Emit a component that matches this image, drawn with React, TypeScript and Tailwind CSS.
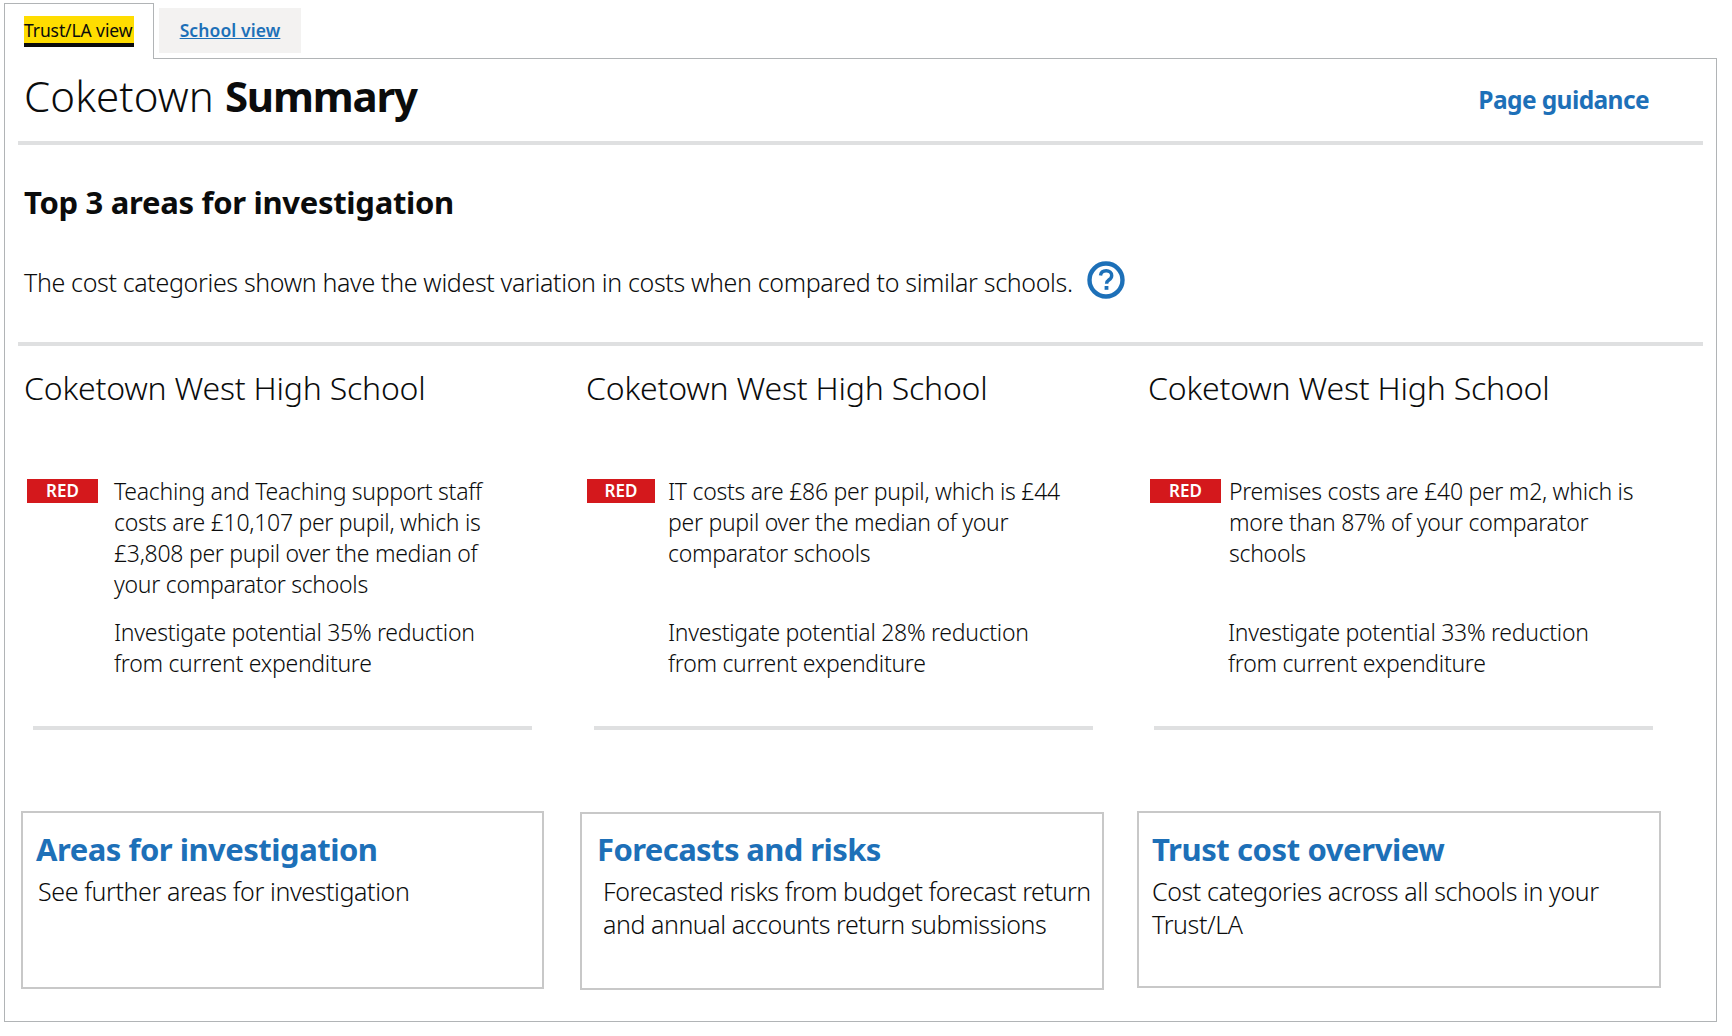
import React from "react";

const font = { fontFamily: '"Noto Sans", "Open Sans", sans-serif' };

const columns = [
  {
    badgeW: "w-[71px]", badgeMl: "ml-[3px]", textMl: "ml-[16px]", secondMl: "ml-[90px]", ruleMl: "ml-[9px]",
    text: ["Teaching and Teaching support staff", "costs are £10,107 per pupil, which is", "£3,808 per pupil over the median of", "your comparator schools"],
    pct: "35%",
  },
  {
    badgeW: "w-[68px]", badgeMl: "ml-[1px]", textMl: "ml-[13px]", secondMl: "ml-[82px]", ruleMl: "ml-[8px]",
    text: ["IT costs are £86 per pupil, which is £44", "per pupil over the median of your", "comparator schools"],
    pct: "28%",
  },
  {
    badgeW: "w-[71px]", badgeMl: "ml-[2px]", textMl: "ml-[8px]", secondMl: "ml-[80px]", ruleMl: "ml-[6px]",
    text: ["Premises costs are £40 per m2, which is", "more than 87% of your comparator", "schools"],
    pct: "33%",
  },
];

function HelpIcon() {
  return (
    <svg width="38" height="38" viewBox="0 0 38 38" className="ml-[14px] -mt-[5px] shrink-0" aria-hidden="true">
      <circle cx="19" cy="19" r="16.5" fill="none" stroke="#1d70b8" strokeWidth="4.4" />
      <path d="M13.5 14.5c.4-3 2.7-4.8 5.7-4.8 3.2 0 5.5 1.9 5.5 4.7 0 2.2-1.2 3.4-2.9 4.6-1.6 1.1-2.2 1.9-2.2 3.8" fill="none" stroke="#1d70b8" strokeWidth="3.4" />
      <rect x="17.6" y="25" width="3.8" height="3.8" fill="#1d70b8" />
    </svg>
  );
}

export default function App() {
  return (
    <div className="w-[1732px] h-[1036px] bg-white text-[#0b0c0c] overflow-hidden pt-[3px] pl-[4px]" style={font}>
      <div className="w-[1713px]">
        <div className="flex items-start h-[55px]">
          <div className="relative z-10 w-[150px] h-[56px] bg-white border border-b-0 border-[#b1b4b6] pl-[19px] pt-[12px]">
            <span className="block w-[110px] h-[31px] bg-[#ffdd00] border-b-[4px] border-[#0b0c0c] text-[17.5px] leading-[28px] tracking-[-0.1px] whitespace-nowrap">Trust/LA view</span>
          </div>
          <div className="ml-[5px] mt-[5px] w-[142px] h-[45px] bg-[#f3f2f1] flex items-center justify-center">
            <a className="text-[17.5px] font-semibold text-[#1d70b8] underline tracking-[0.1px] whitespace-nowrap">School view</a>
          </div>
        </div>
        <div className="h-[964px] border border-[#b1b4b6]">
          <div className="ml-[13px] w-[1685px] h-[86px] border-b-[4px] border-[#dfe0e1] flex items-start justify-between">
            <h1 className="ml-[6px] mt-[9px] text-[42px] leading-[56px] font-light tracking-[0.1px] whitespace-nowrap">
              Coketown <span className="font-bold tracking-[-1.2px]">Summary</span>
            </h1>
            <a className="mr-[54px] mt-[23px] text-[24.5px] leading-[36px] font-bold text-[#1d70b8] tracking-[-0.6px] whitespace-nowrap">Page guidance</a>
          </div>
          <div className="ml-[13px] w-[1685px] h-[166px] border-b-[4px] border-[#dfe0e1] pl-[6px]">
            <h2 className="mt-[35px] text-[31px] leading-[44px] font-bold tracking-[-0.3px] whitespace-nowrap">Top 3 areas for investigation</h2>
            <div className="mt-[41px] flex items-center">
              <p className="text-[25px] leading-[34px] font-light tracking-[-0.35px] whitespace-nowrap">The cost categories shown have the widest variation in costs when compared to similar schools.</p>
              <HelpIcon />
            </div>
          </div>
          <div className="pl-[19px] grid grid-cols-[562px_562px_562px]">
            {columns.map((c, i) => (
              <div key={i} className="h-[469px]">
                <h3 className="mt-[20px] text-[32px] leading-[44px] font-light tracking-[-0.2px] whitespace-nowrap">Coketown West High School</h3>
                <div className="mt-[69px] h-[138px] flex items-start">
                  <span className={`${c.badgeMl} ${c.badgeW} h-[24px] bg-[#d4181c] text-white text-[17px] leading-[24px] font-semibold text-center shrink-0`}>RED</span>
                  <div className={`${c.textMl} -mt-[3px] text-[23px] leading-[31px] font-light tracking-[-0.28px] whitespace-nowrap`}>
                    {c.text.map((t) => (
                      <div key={t}>{t}</div>
                    ))}
                  </div>
                </div>
                <div className={`${c.secondMl} text-[23px] leading-[31px] font-light tracking-[-0.28px] whitespace-nowrap`}>
                  <div>Investigate potential {c.pct} reduction</div>
                  <div>from current expenditure</div>
                </div>
                <div className={`${c.ruleMl} mt-[47px] w-[499px] h-[4px] bg-[#dfe0e1]`} />
              </div>
            ))}
          </div>
          <div className="flex items-start">
            <div className="ml-[16px] mt-[-4px] w-[523px] h-[178px] border-2 border-[#c8c8c8] pl-[13px] pt-[16px]">
              <a className="block text-[31px] leading-[40px] font-bold text-[#1d70b8] tracking-[-0.5px] whitespace-nowrap">Areas for investigation</a>
              <p className="ml-[2px] mt-[6px] text-[25px] leading-[33px] font-light tracking-[-0.4px]">See further areas for investigation</p>
            </div>
            <div className="ml-[36px] mt-[-3px] w-[524px] h-[178px] border-2 border-[#c8c8c8] pl-[15px] pt-[15px]">
              <a className="block text-[31px] leading-[40px] font-bold text-[#1d70b8] tracking-[-0.6px] whitespace-nowrap">Forecasts and risks</a>
              <p className="ml-[6px] mt-[6px] text-[25px] leading-[33px] font-light tracking-[-0.45px] whitespace-nowrap">Forecasted risks from budget forecast return<br />and annual accounts return submissions</p>
            </div>
            <div className="ml-[33px] mt-[-4px] w-[524px] h-[177px] border-2 border-[#c8c8c8] pl-[13px] pt-[16px]">
              <a className="block text-[31px] leading-[40px] font-bold text-[#1d70b8] tracking-[-0.4px] whitespace-nowrap">Trust cost overview</a>
              <p className="mt-[6px] text-[25px] leading-[33px] font-light tracking-[-0.4px] whitespace-nowrap">Cost categories across all schools in your<br />Trust/LA</p>
            </div>
          </div>
        </div>
      </div>
    </div>
  );
}
